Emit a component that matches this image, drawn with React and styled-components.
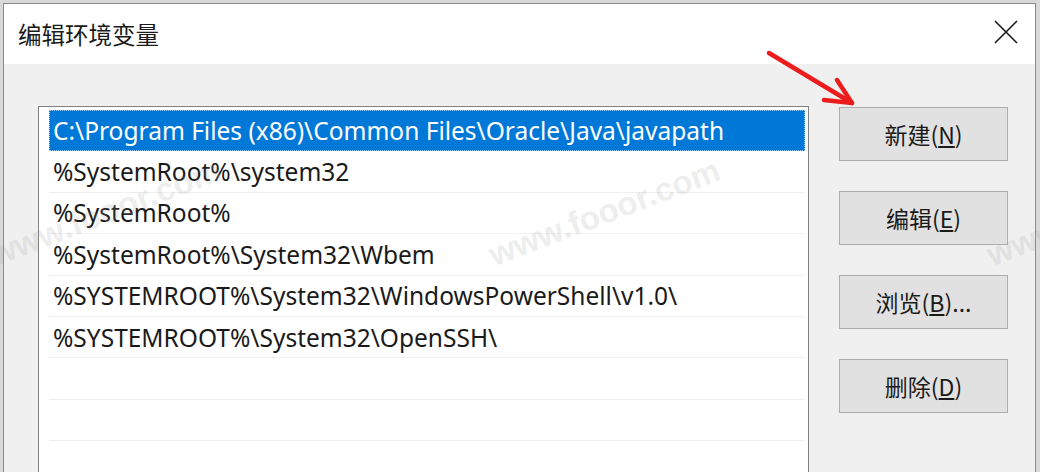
import styled, { createGlobalStyle } from "styled-components";

const GlobalStyle = createGlobalStyle`
  html, body {
    margin: 0;
    padding: 0;
    background: #d9d9d9;
    overflow: hidden;
  }
  #root {
    width: 1040px;
    height: 472px;
  }
`;

const Desktop = styled.div`
  width: 1040px;
  height: 472px;
  padding: 3px 0 0 3px;
  box-sizing: border-box;
  overflow: hidden;
  position: relative;
`;

const Window = styled.div`
  width: 1033px;
  height: 480px;
  box-sizing: border-box;
  border: 1px solid #8a8a8a;
  border-bottom: none;
  background: #f0f0f0;
  display: flex;
  flex-direction: column;
`;

const TitleBar = styled.div`
  height: 60px;
  flex: none;
  background: #ffffff;
  display: flex;
  align-items: center;
  justify-content: space-between;
  padding: 0 14px 0 14px;
`;

const Title = styled.div`
  font-family: "Noto Sans CJK SC", sans-serif;
  font-size: 23.5px;
  color: #1a1a1a;
  margin-top: -1px;
`;

const CloseButton = styled.div`
  width: 30px;
  height: 30px;
  display: flex;
  align-items: center;
  justify-content: center;
  margin-top: -4px;
`;

const Body = styled.div`
  flex: 1;
  display: flex;
  gap: 30px;
  padding: 42px 0 0 34px;
`;

const ListBox = styled.div`
  width: 771px;
  height: 400px;
  box-sizing: border-box;
  border: 1px solid #828282;
  background: #ffffff;
  padding: 3px 3px 0 10px;
`;

const Row = styled.div`
  height: 41.4px;
  box-sizing: border-box;
  display: flex;
  align-items: center;
  padding-left: 4px;
  font-family: "Noto Sans", "Noto Sans CJK SC", sans-serif;
  font-size: 24.5px;
  white-space: nowrap;
  color: ${(p) => (p.selected ? "#ffffff" : "#1a1a1a")};
  background: ${(p) => (p.selected ? "#0078d7" : "transparent")};
  border-bottom: 1px solid ${(p) => (p.selected ? "#0078d7" : "#f0f0f0")};
  outline: ${(p) => (p.selected ? "1px dotted #9ccbf2" : "none")};
  outline-offset: -1px;
`;

const ButtonColumn = styled.div`
  display: flex;
  flex-direction: column;
  gap: 30px;
  padding-top: 1px;
`;

const Button = styled.div`
  width: 169px;
  height: 54px;
  box-sizing: border-box;
  background: #e1e1e1;
  border: 1px solid #adadad;
  display: flex;
  align-items: center;
  justify-content: center;
  font-family: "Noto Sans CJK SC", sans-serif;
  font-size: 23px;
  color: #1a1a1a;

  u {
    text-underline-offset: 2px;
  }
`;

const Watermark = styled.div`
  position: absolute;
  left: ${(p) => p.x}px;
  top: ${(p) => p.y}px;
  transform: rotate(-21deg);
  transform-origin: left bottom;
  font-family: "Liberation Sans", Arial, sans-serif;
  font-weight: bold;
  font-size: 33px;
  color: rgba(150, 150, 150, 0.18);
  white-space: nowrap;
  pointer-events: none;
`;

const Arrow = styled.svg`
  position: absolute;
  left: 760px;
  top: 44px;
`;

const rows = [
  "C:\\Program Files (x86)\\Common Files\\Oracle\\Java\\javapath",
  "%SystemRoot%\\system32",
  "%SystemRoot%",
  "%SystemRoot%\\System32\\Wbem",
  "%SYSTEMROOT%\\System32\\WindowsPowerShell\\v1.0\\",
  "%SYSTEMROOT%\\System32\\OpenSSH\\",
  "",
  "",
  "",
];

const buttons = [
  ["新建(", "N", ")"],
  ["编辑(", "E", ")"],
  ["浏览(", "B", ")..."],
  ["删除(", "D", ")"],
];

const App = () => {
  return (
    <>
      <GlobalStyle />
      <Desktop>
        <Window>
          <TitleBar>
            <Title>编辑环境变量</Title>
            <CloseButton>
              <svg width="26" height="26" viewBox="0 0 26 26">
                <path d="M2 2 L24 24 M24 2 L2 24" stroke="#1a1a1a" strokeWidth="1.6" fill="none" />
              </svg>
            </CloseButton>
          </TitleBar>
          <Body>
            <ListBox>
              {rows.map((r, i) => (
                <Row key={i} selected={i === 0}>
                  {r}
                </Row>
              ))}
            </ListBox>
            <ButtonColumn>
              {buttons.map(([a, k, b]) => (
                <Button key={k}>
                  {a}
                  <u>{k}</u>
                  {b}
                </Button>
              ))}
            </ButtonColumn>
          </Body>
        </Window>
        <Watermark x={497} y={236}>www.fooor.com</Watermark>
        <Watermark x={-2} y={236}>www.fooor.com</Watermark>
        <Watermark x={995} y={236}>www.fooor.com</Watermark>
        <Arrow width="100" height="70" viewBox="0 0 100 70">
          <g stroke="#ec1c1c" strokeWidth="4.5" strokeLinecap="round" fill="none">
            <path d="M9 9 L92 59" />
            <path d="M77 36 L92 59 L64 56" strokeLinejoin="round" />
          </g>
        </Arrow>
      </Desktop>
    </>
  );
};

export default App;
